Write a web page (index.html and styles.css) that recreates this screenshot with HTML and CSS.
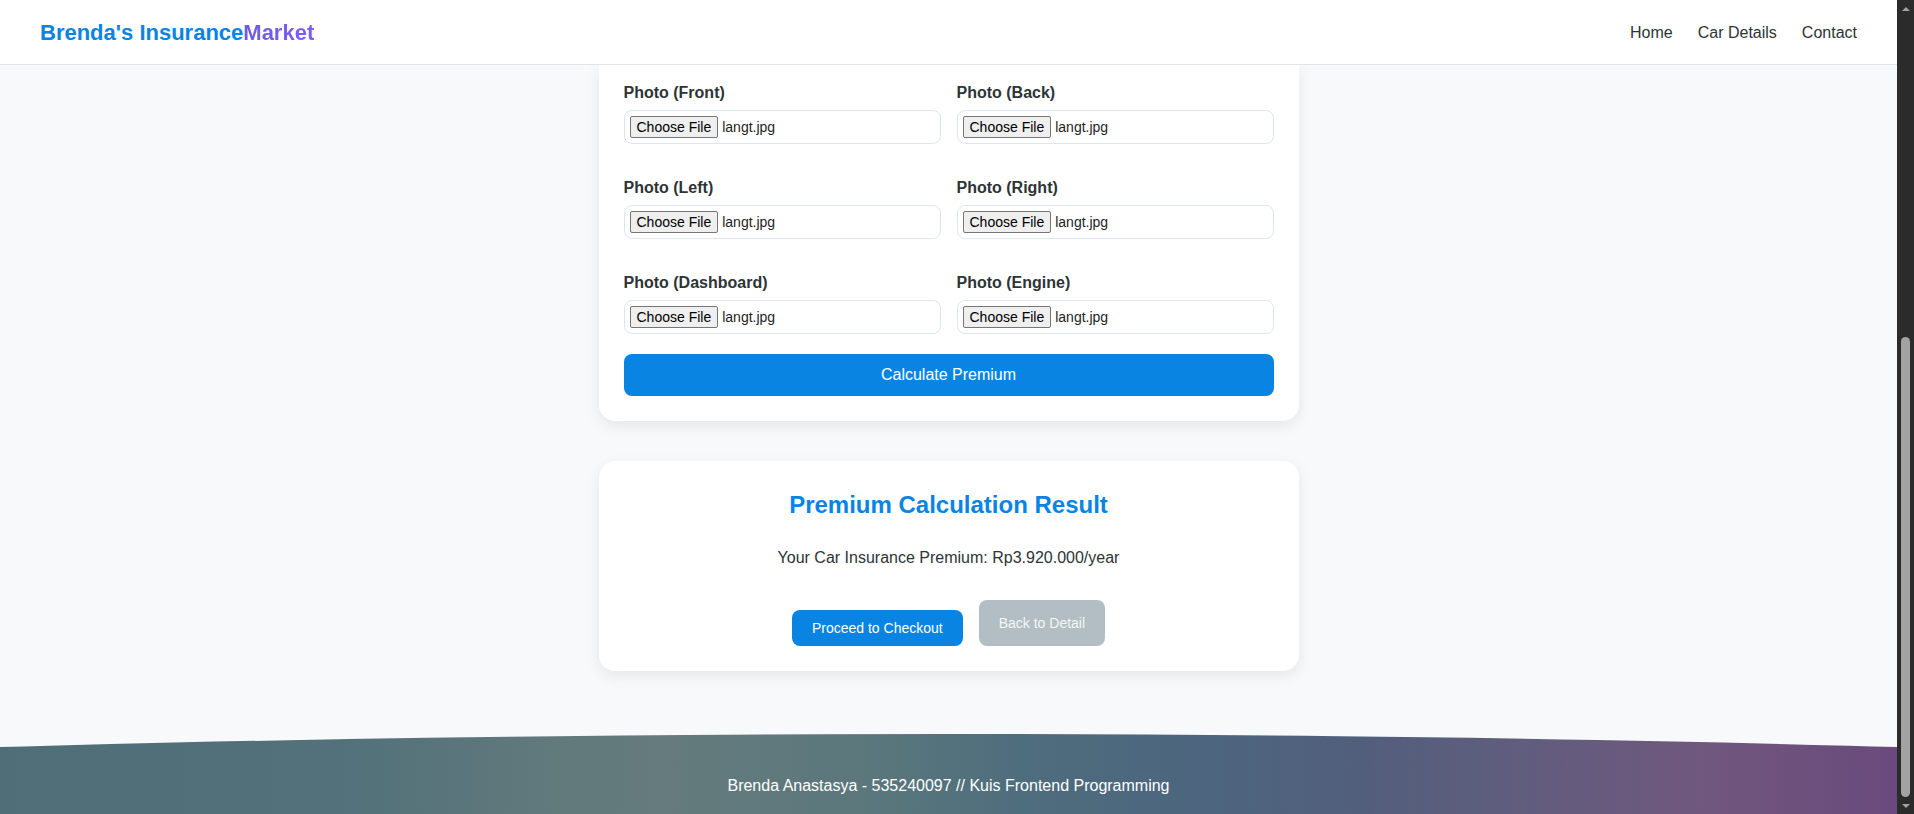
FILE: index.html
```html
<!DOCTYPE html>
<html lang="en">
<head>
<meta charset="utf-8">
<title>Brenda's InsuranceMarket</title>
<link rel="stylesheet" href="styles.css">
</head>
<body>
<div class="page">
  <header class="topbar">
    <div class="logo">Brenda's Insurance<span class="logo-accent">Market</span></div>
    <nav class="nav">
      <a href="#">Home</a>
      <a href="#">Car Details</a>
      <a href="#">Contact</a>
    </nav>
  </header>

  <main class="content">
    <section class="card card-form">
      <div class="photo-grid">
        <div class="field">
          <label class="field-label">Photo (Front)</label>
          <div class="file"><span class="file-btn">Choose File</span><span class="file-name">langt.jpg</span></div>
        </div>
        <div class="field">
          <label class="field-label">Photo (Back)</label>
          <div class="file"><span class="file-btn">Choose File</span><span class="file-name">langt.jpg</span></div>
        </div>
        <div class="field">
          <label class="field-label">Photo (Left)</label>
          <div class="file"><span class="file-btn">Choose File</span><span class="file-name">langt.jpg</span></div>
        </div>
        <div class="field">
          <label class="field-label">Photo (Right)</label>
          <div class="file"><span class="file-btn">Choose File</span><span class="file-name">langt.jpg</span></div>
        </div>
        <div class="field">
          <label class="field-label">Photo (Dashboard)</label>
          <div class="file"><span class="file-btn">Choose File</span><span class="file-name">langt.jpg</span></div>
        </div>
        <div class="field">
          <label class="field-label">Photo (Engine)</label>
          <div class="file"><span class="file-btn">Choose File</span><span class="file-name">langt.jpg</span></div>
        </div>
      </div>
      <button class="btn-calc" type="button">Calculate Premium</button>
    </section>

    <section class="card card-result">
      <h2 class="result-title">Premium Calculation Result</h2>
      <p class="result-text">Your Car Insurance Premium: Rp3.920.000/year</p>
      <div class="result-actions">
        <button class="btn btn-primary" type="button">Proceed to Checkout</button>
        <button class="btn btn-muted" type="button">Back to Detail</button>
      </div>
    </section>

    <footer class="footer">
      <p class="footer-text">Brenda Anastasya - 535240097 // Kuis Frontend Programming</p>
    </footer>
  </main>
</div>
<div class="scrollbar">
  <div class="sb-arrow"><span class="tri-up"></span></div>
  <div class="sb-space"></div>
  <div class="sb-thumb"></div>
  <div class="sb-arrow"><span class="tri-down"></span></div>
</div>
</body>
</html>
```

FILE: styles.css
```css
* { box-sizing: border-box; }

html, body {
  margin: 0;
  height: 814px;
  overflow: hidden;
}

body {
  display: flex;
  font-family: "Liberation Sans", Arial, sans-serif;
  color: #2d3436;
  background: #f8f9fa;
}

.page {
  flex: 1;
  display: flex;
  flex-direction: column;
  height: 814px;
  overflow: hidden;
  background: #f8f9fa;
}

/* Header */
.topbar {
  flex: 0 0 65px;
  height: 65px;
  background: #ffffff;
  border-bottom: 1px solid #e1e5ea;
  display: flex;
  align-items: center;
  justify-content: space-between;
  padding: 2px 40px 0;
  position: relative;
  z-index: 2;
}

.logo {
  font-size: 22px;
  font-weight: 700;
  color: #0984e3;
}

.logo-accent {
  background: linear-gradient(90deg, #6c5ce7, #7d5cf0);
  -webkit-background-clip: text;
  background-clip: text;
  color: transparent;
}

.nav {
  display: flex;
  gap: 25px;
}

.nav a {
  font-size: 16px;
  color: #2d3436;
  text-decoration: none;
}

/* Content */
.content {
  display: flex;
  flex-direction: column;
  align-items: center;
}

.card {
  width: 700px;
  background: #ffffff;
  border-radius: 16px;
  box-shadow: 0 5px 15px rgba(0, 0, 0, 0.08);
  padding: 25px;
}

.card-form {
  border-radius: 0 0 16px 16px;
  padding-top: 19px;
}

.photo-grid {
  display: grid;
  grid-template-columns: 1fr 1fr;
  column-gap: 16px;
  row-gap: 35px;
}

.field-label {
  display: block;
  font-size: 16px;
  font-weight: 700;
  color: #2d3436;
  margin-bottom: 8px;
}

.file {
  height: 34px;
  border: 1px solid #dfe6e9;
  border-radius: 8px;
  background: #ffffff;
  display: flex;
  align-items: center;
  padding: 0 5px;
}

.file-btn {
  height: 22px;
  display: inline-flex;
  align-items: center;
  padding: 0 6px;
  border: 1px solid #767676;
  border-radius: 2px;
  background: #efefef;
  color: #000000;
  font-size: 14px;
  margin-right: 4px;
}

.file-name {
  font-size: 14px;
  color: #1e1e1e;
}

.btn-calc {
  display: block;
  width: 100%;
  height: 42px;
  margin-top: 20px;
  border: none;
  border-radius: 8px;
  background: #0984e3;
  color: #ffffff;
  font-family: inherit;
  font-size: 16px;
}

.card-result {
  margin-top: 40px;
  text-align: center;
}

.result-title {
  margin: 5px 0 0;
  font-size: 24px;
  font-weight: 700;
  color: #0984e3;
}

.result-text {
  margin: 30px 0 0;
  font-size: 16px;
  color: #2d3436;
}

.result-actions {
  margin-top: 33px;
  display: flex;
  justify-content: center;
  align-items: flex-end;
  gap: 16px;
}

.btn {
  border: none;
  border-radius: 8px;
  font-family: inherit;
  font-size: 14px;
  color: #ffffff;
  padding: 0 20px;
}

.btn-primary {
  height: 36px;
  background: #0984e3;
}

.btn-muted {
  height: 46px;
  background: #b2bec3;
  color: #f4f6f7;
}

/* Footer */
.footer {
  align-self: stretch;
  margin-top: 63px;
  height: 120px;
  padding-top: 43px;
  text-align: center;
  background: linear-gradient(90deg,
    #4f6e78 0%,
    #52717a 18%,
    #627a7c 30%,
    #657b7d 35%,
    #5a777c 46%,
    #4e6d7d 54%,
    #4c667e 62%,
    #525f7c 72%,
    #605d7d 80%,
    #70577e 90%,
    #6a4a7c 100%);
  clip-path: ellipse(2670px 200px at 50% 200px);
}

.footer-text {
  margin: 0;
  font-size: 16px;
  color: #ffffff;
}

/* Scrollbar */
.scrollbar {
  flex: 0 0 17px;
  width: 17px;
  height: 814px;
  background: #2b2b2b;
  display: flex;
  flex-direction: column;
  align-items: center;
}

.sb-arrow {
  flex: 0 0 17px;
  display: flex;
  align-items: center;
  justify-content: center;
}

.tri-up {
  width: 0;
  height: 0;
  border-left: 4px solid transparent;
  border-right: 4px solid transparent;
  border-bottom: 4px solid #a3a3a3;
}

.tri-down {
  width: 0;
  height: 0;
  border-left: 4px solid transparent;
  border-right: 4px solid transparent;
  border-top: 4px solid #a3a3a3;
}

.sb-space {
  flex: 0 0 320px;
}

.sb-thumb {
  flex: 0 0 460px;
  width: 9px;
  border-radius: 5px;
  background: #a3a3a3;
}
```
